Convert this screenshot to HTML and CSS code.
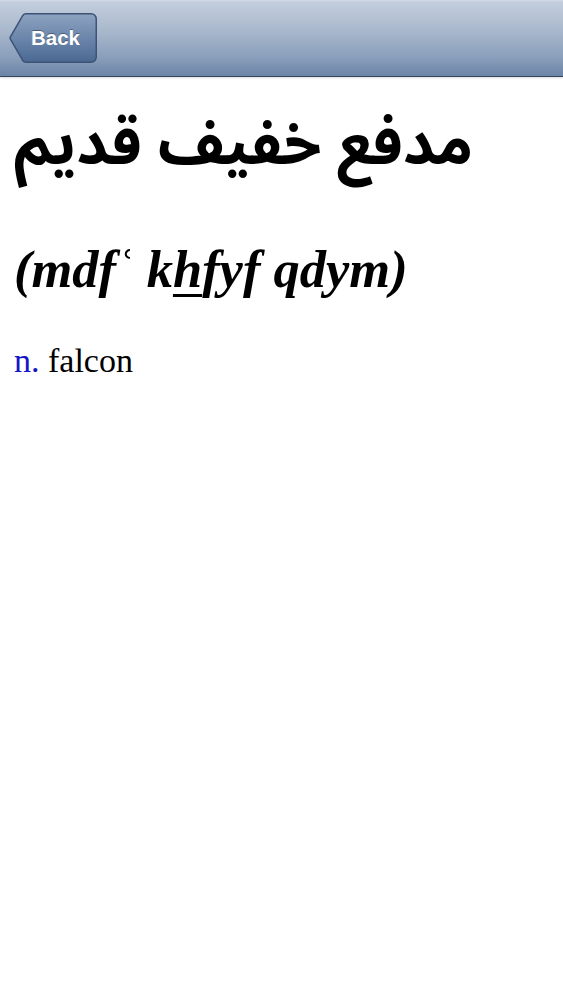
FILE: index.html
```html
<!DOCTYPE html>
<html lang="en">
<head>
<meta charset="utf-8">
<title>Entry</title>
<link rel="stylesheet" href="styles.css">
</head>
<body>
<header class="navbar">
  <button class="back">
    <svg class="back-shape" viewBox="0 0 88 50" width="88" height="50" aria-hidden="true">
      <defs>
        <linearGradient id="bg" x1="0" y1="0" x2="0" y2="1">
          <stop offset="0" stop-color="#8da3c1"/>
          <stop offset="0.5" stop-color="#6b86ab"/>
          <stop offset="1" stop-color="#4a6892"/>
        </linearGradient>
      </defs>
      <path d="M17,0.75 H81.5 Q87.25,0.75 87.25,6.5 V43.5 Q87.25,49.25 81.5,49.25 H17 Q15,49.25 14,47.8 L1.4,26.2 Q0.75,25 1.4,23.8 L14,2.2 Q15,0.75 17,0.75 Z" fill="url(#bg)" stroke="#3d5375" stroke-width="1.5"/>
    </svg>
    <span class="back-label">Back</span>
  </button>
</header>
<main class="entry">
  <h1 class="headword"><span dir="rtl" lang="ar">مدفع خفيف قديم</span></h1>
  <p class="translit">(mdfʿ k<span class="ul">h</span>fyf qdym)</p>
  <p class="sense"><span class="pos">n.</span> falcon</p>
</main>
</body>
</html>
```
FILE: styles.css
```css
html, body {
  margin: 0;
  padding: 0;
  background: #ffffff;
}
body {
  width: 563px;
  font-family: "Liberation Serif", "Times New Roman", serif;
}
.navbar {
  height: 76px;
  display: flex;
  align-items: center;
  padding-left: 9px;
  background: linear-gradient(to bottom, #d2dbe6 0px, #c3cedd 2px, #a9b8cc 40%, #8a9fbb 75%, #6b84a7 100%);
  border-bottom: 1px solid #34465f;
  box-shadow: 0 1px 2px rgba(0,0,0,0.15);
}
.back {
  position: relative;
  width: 88px;
  height: 50px;
  margin: 0;
  padding: 0 0 0 22px;
  border: 0;
  background: transparent;
  display: flex;
  align-items: center;
  cursor: pointer;
}
.back-shape {
  position: absolute;
  left: 0;
  top: 0;
}
.back-label {
  position: relative;
  font-family: "Liberation Sans", Arial, sans-serif;
  font-weight: bold;
  font-size: 20.5px;
  color: #ffffff;
  text-shadow: 0 -1px 0 rgba(0,0,0,0.35);
}
.entry {
  padding: 0 14px;
}
.headword {
  margin: 13px 0 0;
  font-family: "Noto Sans Arabic", "DejaVu Sans", sans-serif;
  font-weight: bold;
  font-size: 61px;
  line-height: 110px;
  white-space: nowrap;
  color: #000;
}
.translit {
  margin: 39px 0 0;
  font-weight: bold;
  font-style: italic;
  font-size: 52.5px;
  line-height: 60px;
  white-space: nowrap;
  color: #000;
}
.ul {
  text-decoration: underline;
  text-decoration-thickness: 3px;
  text-underline-offset: 7px;
}
.sense {
  margin: 42px 0 0;
  font-size: 34px;
  line-height: 40px;
  color: #000;
}
.pos {
  color: #1515c8;
}
```
